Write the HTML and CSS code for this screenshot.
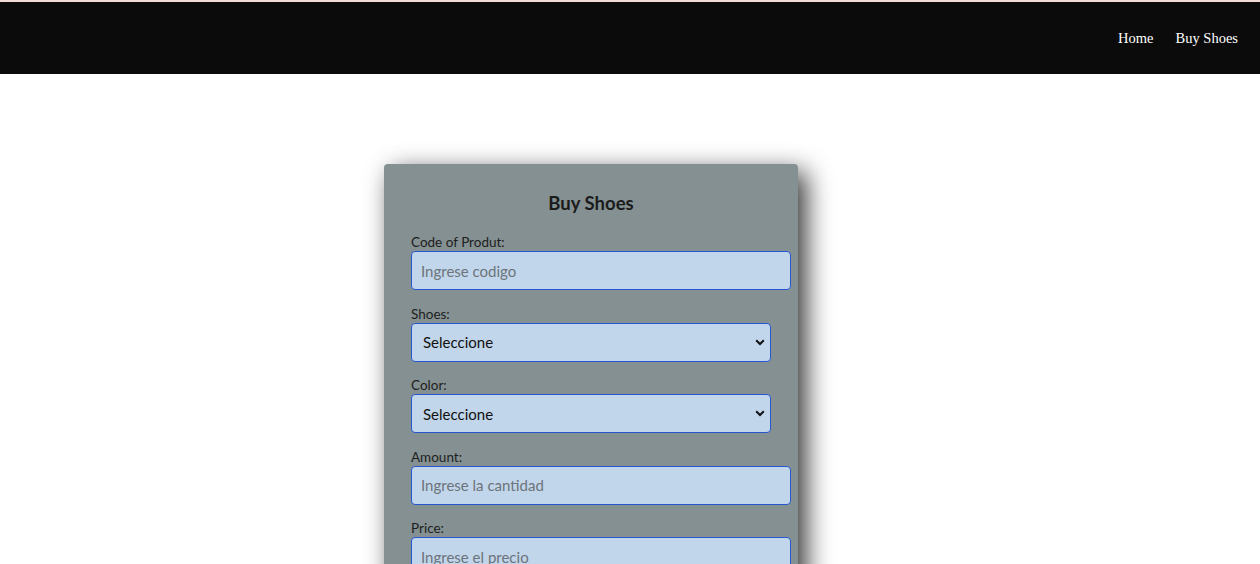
FILE: index.html
```html
<!DOCTYPE html>
<html lang="es">
<head>
<meta charset="utf-8">
<title>Buy Shoes</title>
<link rel="stylesheet" href="styles.css">
</head>
<body>
<header class="topbar">
  <nav class="nav">
    <a class="nav-link" href="#">Home</a>
    <a class="nav-link" href="#">Buy Shoes</a>
  </nav>
</header>
<main class="page">
  <form class="card">
    <h2 class="card-title">Buy Shoes</h2>
    <div class="field">
      <label class="label">Code of Produt:</label>
      <input class="control control-wide" type="text" placeholder="Ingrese codigo">
    </div>
    <div class="field">
      <label class="label">Shoes:</label>
      <div class="select-wrap">
        <select class="control control-select"><option>Seleccione</option></select>
        <svg class="chev" width="10" height="7" viewBox="0 0 10 7"><path d="M1.2 1.3 L5 5 L8.8 1.3" fill="none" stroke="#111" stroke-width="2"/></svg>
      </div>
    </div>
    <div class="field">
      <label class="label">Color:</label>
      <div class="select-wrap">
        <select class="control control-select"><option>Seleccione</option></select>
        <svg class="chev" width="10" height="7" viewBox="0 0 10 7"><path d="M1.2 1.3 L5 5 L8.8 1.3" fill="none" stroke="#111" stroke-width="2"/></svg>
      </div>
    </div>
    <div class="field">
      <label class="label">Amount:</label>
      <input class="control control-wide" type="text" placeholder="Ingrese la cantidad">
    </div>
    <div class="field">
      <label class="label">Price:</label>
      <input class="control control-wide" type="text" placeholder="Ingrese el precio">
    </div>
  </form>
</main>
</body>
</html>
```
FILE: styles.css
```css
* { box-sizing: border-box; }
html, body { margin: 0; padding: 0; }
body {
  background: #ffffff;
  overflow: hidden;
  height: 564px;
  border-top: 2px solid #f1ddd6;
  font-family: Lato, "Open Sans", sans-serif;
}
.topbar {
  background: #0b0b0b;
  height: 72px;
  display: flex;
  align-items: center;
  justify-content: flex-end;
  padding-right: 22px;
}
.nav { display: flex; gap: 22px; margin-top: 1px; }
.nav-link {
  color: #ffffff;
  text-decoration: none;
  font-family: "Liberation Serif", "Times New Roman", serif;
  font-size: 14.5px;
}
.page {
  display: flex;
  padding-top: 90px;
  padding-left: 384px;
}
.card {
  width: 414px;
  background: #849091;
  border-radius: 4px;
  padding: 24px 7px 40px 27px;
  box-shadow: 8px 8px 26px rgba(0, 0, 0, 0.8);
}
.card-title {
  margin: 0 0 16px 0;
  text-align: center;
  font-size: 18.5px;
  line-height: 30px;
  font-weight: 700;
  color: #1b1b1b;
  padding-right: 20px;
}
.field { margin-bottom: 15.5px; }
.label {
  display: block;
  height: 17px;
  font-size: 13.5px;
  line-height: 17px;
  color: #1e1e1e;
}
.control {
  display: block;
  height: 39px;
  background: #c1d6ea;
  border: 1px solid #2757d0;
  border-radius: 4px;
  font-family: Lato, "Open Sans", sans-serif;
  font-size: 15px;
  color: #111;
  outline: none;
}
.control-wide { width: 380px; padding: 0 9px; }
.control::placeholder { color: #6c737b; }
.select-wrap { position: relative; width: 360px; }
.control-select {
  width: 360px;
  appearance: none;
  -webkit-appearance: none;
  padding: 0 11px;
  color: #111;
}
.chev { position: absolute; right: 6px; top: 16px; pointer-events: none; }
```
